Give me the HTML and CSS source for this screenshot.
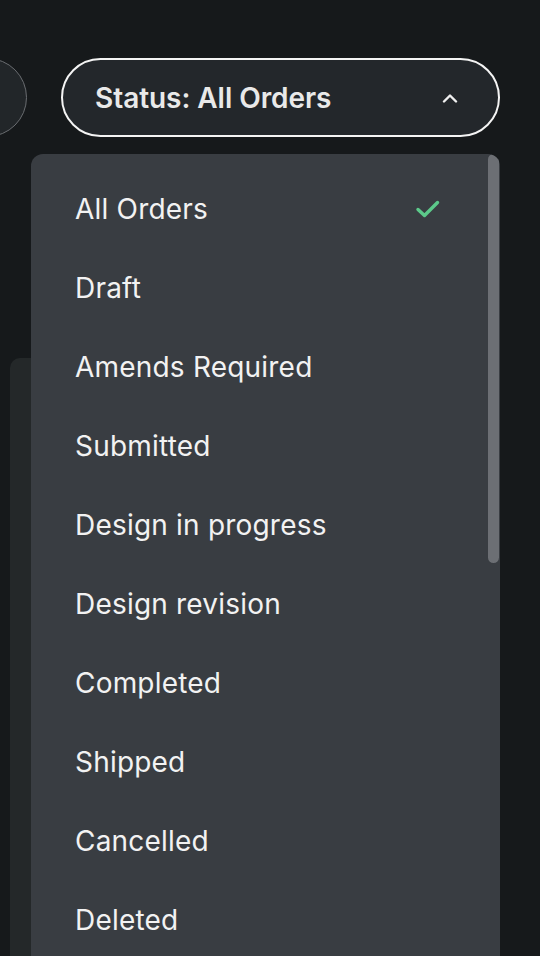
FILE: index.html
```html
<!DOCTYPE html>
<html>
<head>
<meta charset="utf-8">
<link rel="stylesheet" href="styles.css">
</head>
<body>
<div class="screen">
  <div class="toolbar">
    <div class="circle-btn"></div>
    <button class="status-btn">
      <span class="status-label">Status: All Orders</span>
      <svg class="chev" width="16" height="10" viewBox="0 0 16 10"><path d="M2 8.5 L8 2.5 L14 8.5" fill="none" stroke="#f0f0f0" stroke-width="2.4" stroke-linecap="round" stroke-linejoin="round"/></svg>
    </button>
  </div>
  <div class="under-panel"></div>
  <div class="menu">
    <ul class="menu-list">
      <li class="item selected"><span>All Orders</span>
        <svg class="check" width="26" height="20" viewBox="0 0 26 20"><path d="M3 10.5 L9.5 16.5 L22.5 3.5" fill="none" stroke="#5cc98a" stroke-width="3.4" stroke-linecap="round" stroke-linejoin="round"/></svg>
      </li>
      <li class="item"><span>Draft</span></li>
      <li class="item"><span>Amends Required</span></li>
      <li class="item"><span>Submitted</span></li>
      <li class="item"><span>Design in progress</span></li>
      <li class="item"><span>Design revision</span></li>
      <li class="item"><span>Completed</span></li>
      <li class="item"><span>Shipped</span></li>
      <li class="item"><span>Cancelled</span></li>
      <li class="item"><span>Deleted</span></li>
    </ul>
    <div class="scrollbar"></div>
  </div>
</div>
</body>
</html>
```

FILE: styles.css
```css
* { box-sizing: border-box; }
html, body {
  margin: 0;
  padding: 0;
  background: #16191b;
  font-family: Inter, "Noto Sans", sans-serif;
}
.screen {
  position: relative;
  width: 540px;
  height: 956px;
  overflow: hidden;
}
.toolbar {
  display: flex;
  align-items: center;
  gap: 34px;
  padding-top: 58px;
  margin-left: -52px;
}
.circle-btn {
  width: 79px;
  height: 79px;
  border-radius: 50%;
  border: 1.5px solid #6a6d71;
  background: #222629;
  flex: none;
}
.status-btn {
  width: 439px;
  height: 79px;
  border: 2px solid #f4f4f4;
  border-radius: 40px;
  background: #23272b;
  display: flex;
  align-items: center;
  justify-content: space-between;
  padding: 0 40px 0 32px;
  font-family: inherit;
  cursor: pointer;
}
.status-label {
  font-size: 28px;
  font-weight: 600;
  color: #e9e9e9;
  letter-spacing: -0.05px;
}
.chev { display: block; }
.under-panel {
  position: absolute;
  left: 10px;
  top: 358px;
  width: 60px;
  height: 700px;
  background: #242829;
  border-radius: 10px;
}
.menu {
  position: absolute;
  left: 31px;
  top: 154px;
  width: 469px;
  height: 840px;
  background: #393d42;
  border-radius: 12px;
  overflow: hidden;
}
.menu-list {
  list-style: none;
  margin: 0;
  padding: 15px 0 0 0;
}
.item {
  height: 79px;
  display: flex;
  align-items: center;
  justify-content: space-between;
  padding: 0 58px 0 44px;
  font-size: 28px;
  font-weight: 400;
  letter-spacing: 0.2px;
  color: #f2f2f2;
}
.check { display: block; margin-right: 1px; }
.scrollbar {
  position: absolute;
  right: 1px;
  top: 0;
  width: 11px;
  height: 409px;
  background: #6c6f74;
  border-radius: 6px;
}
```
